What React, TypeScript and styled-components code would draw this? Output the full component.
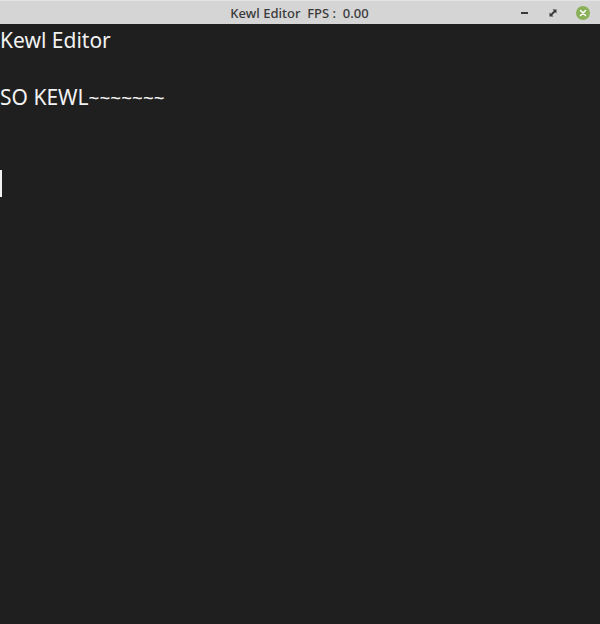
import React from "react";
import styled, { createGlobalStyle } from "styled-components";

const Global = createGlobalStyle`
  html, body { margin: 0; padding: 0; background: #1f1f1f; }
  #root { width: 600px; height: 624px; }
`;

const Window = styled.div`
  width: 600px;
  height: 624px;
  display: flex;
  flex-direction: column;
  background: #1f1f1f;
  overflow: hidden;
`;

const TitleBar = styled.div`
  height: 24px;
  flex: none;
  background: #d5d5d5;
  border-top: 1px solid #e4e4e4;
  box-sizing: border-box;
  position: relative;
  display: flex;
  align-items: center;
  justify-content: center;
`;

const Title = styled.span`
  font-family: "Noto Sans", sans-serif;
  font-size: 13px;
  color: #3a3a3a;
  font-weight: 500;
  margin-left: -1px;
`;

const Controls = styled.div`
  position: absolute;
  right: 10px;
  top: 0;
  bottom: 0;
  display: flex;
  align-items: center;
  gap: 18px;
`;

const Content = styled.div`
  flex: 1;
  display: flex;
  flex-direction: column;
  font-family: "Noto Sans", sans-serif;
  color: #f2f2f2;
  font-size: 21px;
  padding-top: 2px;
`;

const Line = styled.div`
  height: 28.5px;
  line-height: 28.5px;
  white-space: pre;
`;

const Tildes = styled.span`
  font-size: 19px;
`;

const Cursor = styled.div`
  width: 2px;
  height: 27px;
  margin-top: 1px;
  background: #f2f2f2;
`;

export default function App() {
  return (
    <>
      <Global />
      <Window>
        <TitleBar>
          <Title>Kewl Editor&nbsp; FPS : &nbsp;0.00</Title>
          <Controls>
            <svg width="10" height="10" viewBox="0 0 10 10">
              <rect x="1" y="4" width="7" height="2" fill="#3a3a3a" />
            </svg>
            <svg width="10" height="10" viewBox="0 0 10 10">
              <path d="M4.5 1.5 L8.5 1.5 L8.5 5.5 Z" fill="#3a3a3a" />
              <path d="M1.5 4.5 L1.5 8.5 L5.5 8.5 Z" fill="#3a3a3a" />
              <path d="M3 7 L7 3" stroke="#3a3a3a" strokeWidth="1.8" />
            </svg>
            <svg width="14" height="14" viewBox="0 0 14 14">
              <circle cx="7" cy="7" r="7" fill="#8bb158" />
              <path d="M4.5 4.5 L9.5 9.5 M9.5 4.5 L4.5 9.5" stroke="#fff" strokeWidth="1.6" strokeLinecap="round" />
            </svg>
          </Controls>
        </TitleBar>
        <Content>
          <Line>Kewl Editor</Line>
          <Line />
          <Line>
            SO KEWL<Tildes>~~~~~~~</Tildes>
          </Line>
          <Line />
          <Line />
          <Cursor />
        </Content>
      </Window>
    </>
  );
}
